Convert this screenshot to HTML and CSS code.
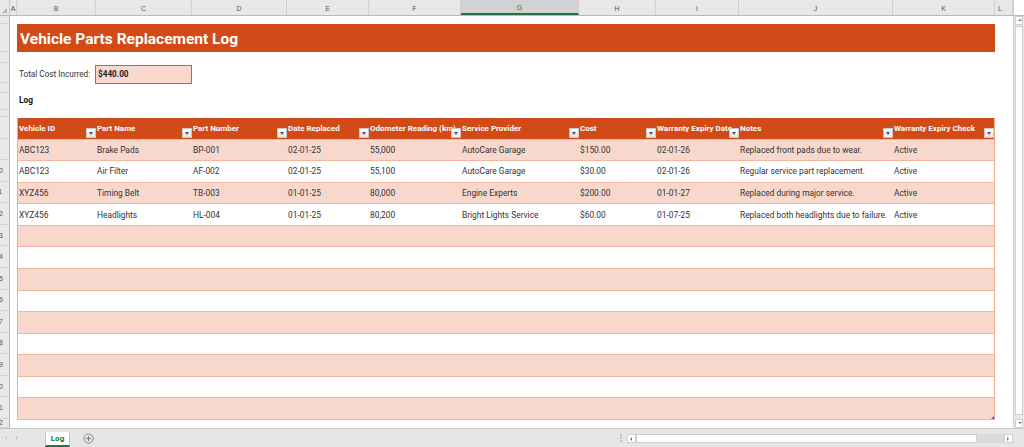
FILE: index.html
```html
<!DOCTYPE html>
<html>
<head>
<meta charset="utf-8">
<link rel="stylesheet" href="styles.css">
</head>
<body>
<div class="app">
  <div class="colbar">
    <div class="corner"><span class="tri"></span></div>
    <div class="colh w-a">A</div>
    <div class="colh w-b">B</div>
    <div class="colh w-c">C</div>
    <div class="colh w-d">D</div>
    <div class="colh w-e">E</div>
    <div class="colh w-f">F</div>
    <div class="colh w-g sel">G</div>
    <div class="colh w-h">H</div>
    <div class="colh w-i">I</div>
    <div class="colh w-j">J</div>
    <div class="colh w-k">K</div>
    <div class="colh w-l">L</div>
    <div class="colrest"></div>
  </div>
  <div class="main">
    <div class="rowheads">
      <div class="rh r1"></div>
      <div class="rh r2"></div>
      <div class="rh r3"></div>
      <div class="rh r4"></div>
      <div class="rh r5"></div>
      <div class="rh r6"></div>
      <div class="rh r7"></div>
      <div class="rh rt"></div>
      <div class="rh rt"><span>9</span></div>
      <div class="rh rt"><span>10</span></div>
      <div class="rh rt"><span>11</span></div>
      <div class="rh rt"><span>12</span></div>
      <div class="rh rt"><span>13</span></div>
      <div class="rh rt"><span>14</span></div>
      <div class="rh rt"><span>15</span></div>
      <div class="rh rt"><span>16</span></div>
      <div class="rh rt"><span>17</span></div>
      <div class="rh rt"><span>18</span></div>
      <div class="rh rt"><span>19</span></div>
      <div class="rh rt"><span>20</span></div>
      <div class="rh rt"><span>21</span></div>
      <div class="rh r22"><span>22</span></div>
    </div>
    <div class="sheet">
      <div class="title">Vehicle Parts Replacement Log</div>
      <div class="total">
        <div class="total-label">Total Cost Incurred:</div>
        <div class="total-box">$440.00</div>
      </div>
      <div class="section">Log</div>
      <div class="table">
        <div class="tr head">
          <div class="th">Vehicle ID<span class="dd"></span></div>
          <div class="th">Part Name<span class="dd"></span></div>
          <div class="th">Part Number<span class="dd"></span></div>
          <div class="th">Date Replaced<span class="dd"></span></div>
          <div class="th">Odometer Reading (km)<span class="dd"></span></div>
          <div class="th">Service Provider<span class="dd"></span></div>
          <div class="th">Cost<span class="dd"></span></div>
          <div class="th">Warranty Expiry Date<span class="dd"></span></div>
          <div class="th">Notes<span class="dd"></span></div>
          <div class="th">Warranty Expiry Check<span class="dd"></span></div>
        </div>
        <div class="tr odd">
          <div class="td">ABC123</div><div class="td">Brake Pads</div><div class="td">BP-001</div><div class="td">02-01-25</div><div class="td">55,000</div><div class="td">AutoCare Garage</div><div class="td">$150.00</div><div class="td">02-01-26</div><div class="td">Replaced front pads due to wear.</div><div class="td">Active</div>
        </div>
        <div class="tr">
          <div class="td">ABC123</div><div class="td">Air Filter</div><div class="td">AF-002</div><div class="td">02-01-25</div><div class="td">55,100</div><div class="td">AutoCare Garage</div><div class="td">$30.00</div><div class="td">02-01-26</div><div class="td">Regular service part replacement.</div><div class="td">Active</div>
        </div>
        <div class="tr odd">
          <div class="td">XYZ456</div><div class="td">Timing Belt</div><div class="td">TB-003</div><div class="td">01-01-25</div><div class="td">80,000</div><div class="td">Engine Experts</div><div class="td">$200.00</div><div class="td">01-01-27</div><div class="td">Replaced during major service.</div><div class="td">Active</div>
        </div>
        <div class="tr">
          <div class="td">XYZ456</div><div class="td">Headlights</div><div class="td">HL-004</div><div class="td">01-01-25</div><div class="td">80,200</div><div class="td">Bright Lights Service</div><div class="td">$60.00</div><div class="td">01-07-25</div><div class="td">Replaced both headlights due to failure.</div><div class="td">Active</div>
        </div>
        <div class="tr odd empty"></div>
        <div class="tr empty"></div>
        <div class="tr odd empty"></div>
        <div class="tr empty"></div>
        <div class="tr odd empty"></div>
        <div class="tr empty"></div>
        <div class="tr odd empty"></div>
        <div class="tr empty"></div>
        <div class="tr odd empty last"><span class="resize"></span></div>
      </div>
    </div>
    <div class="vscroll">
      <div class="varrow up"></div>
      <div class="vtrack"></div>
      <div class="varrow down"></div>
    </div>
  </div>
  <div class="tabbar">
    <div class="nav"><span class="navl"></span><span class="navr"></span></div>
    <div class="tab">Log</div>
    <div class="addtab"><svg width="11" height="11" viewBox="0 0 11 11"><circle cx="5.5" cy="5.5" r="4.6" fill="none" stroke="#7a7a7a" stroke-width="0.9"/><path d="M5.5 3v5M3 5.5h5" stroke="#7a7a7a" stroke-width="1"/></svg></div>
    <div class="tabspace"></div>
    <div class="dots"></div>
    <div class="hscroll">
      <div class="harrow left"></div>
      <div class="hthumb"></div>
      <div class="htrack"></div>
      <div class="harrow right"></div>
    </div>
  </div>
</div>
</body>
</html>
```

FILE: styles.css
```css
* { box-sizing: border-box; }
html, body { margin: 0; padding: 0; }
body {
  width: 1024px;
  height: 447px;
  overflow: hidden;
  background: #fff;
  font-family: Roboto, "Liberation Sans", Arial, sans-serif;
  color: #222;
}
.app { display: flex; flex-direction: column; height: 447px; }

/* column header bar */
.colbar {
  display: flex;
  height: 16px;
  background: #e8e8e8;
  border-bottom: 1px solid #b9b9b9;
  font-family: "Liberation Sans", Arial, sans-serif;
  font-size: 7px;
  color: #555;
}
.corner { width: 10px; border-right: 1px solid #c9c9c9; position: relative; }
.corner .tri {
  position: absolute; right: 2px; bottom: 2px;
  width: 0; height: 0;
  border-left: 5px solid transparent;
  border-bottom: 5px solid #b3b3b3;
}
.colh {
  display: flex; align-items: center; justify-content: center;
  border-right: 1px solid #d0d0d0;
  padding-top: 1px;
}
.colh.sel { background: #d2d2d2; border-bottom: 2px solid #217346; color: #217346; }
.w-a { width: 7px; }
.w-b { width: 79px; }
.w-c { width: 96px; }
.w-d { width: 95px; }
.w-e { width: 82px; }
.w-f { width: 92px; }
.w-g { width: 118px; }
.w-h { width: 77px; }
.w-i { width: 83px; }
.w-j { width: 154px; }
.w-k { width: 102px; }
.w-l { width: 18px; justify-content: flex-start; padding-left: 3px; }
.colrest { flex: 1; background: #fff; border-left: 1px solid #d0d0d0; }

/* main area */
.main { display: flex; height: 412px; }
.rowheads {
  width: 10px;
  background: #e8e8e8;
  border-right: 1px solid #b9b9b9;
  display: flex; flex-direction: column;
  font-family: "Liberation Sans", Arial, sans-serif;
  font-size: 7px;
  color: #555;
}
.rh {
  border-bottom: 1px solid #d4d4d4;
  overflow: hidden;
  display: flex; align-items: center;
  white-space: nowrap;
}
.rh span { margin-left: -5px; }
.r1 { height: 8px; }
.r2 { height: 28px; }
.r3 { height: 11px; }
.r4 { height: 20px; }
.r5 { height: 10px; }
.r6 { height: 17px; }
.r7 { height: 7px; }
.rt { height: 21.57px; }
.r22 { flex: 1; }

.sheet { flex: 1; padding: 8px 0 0 7px; min-width: 0; }

.title {
  width: 978px;
  height: 28px;
  background: #d24a18;
  color: #fff;
  font-weight: 700;
  font-size: 15.5px;
  display: flex; align-items: center;
  padding-left: 3px;
  padding-top: 1px;
}

.total { display: flex; align-items: center; height: 22px; margin-top: 11px; }
.total-label { width: 78px; font-size: 8.2px; padding-left: 2px; color: #333; }
.total-box {
  width: 97px; height: 19px;
  background: #f8d8cc;
  border: 1px solid #7b7b7b;
  font-size: 8.2px; font-weight: 700;
  display: flex; align-items: center;
  padding-left: 2px;
}

.section { height: 22px; margin-top: 4px; font-size: 8.4px; font-weight: 700; padding-left: 2px; display: flex; align-items: center; color: #111; }

.table {
  margin-top: 7px;
  width: 978px;
  border-left: 1px solid #f2a98e;
  border-right: 1px solid #f2a98e;
}
.tr {
  display: grid;
  grid-template-columns: 78px 96px 95px 82px 92px 118px 77px 83px 154px 101px;
  height: 21.57px;
  border-bottom: 1px solid #f4b6a0;
  font-size: 8.4px;
  color: #333;
  position: relative;
}
.tr.odd { background: #f8d8cc; }
.tr.head {
  background: #d24a18;
  color: #fff;
  font-weight: 700;
  font-size: 8px;
  border-bottom: 1px solid #f4b6a0;
}
.th {
  position: relative;
  white-space: nowrap;
  padding: 6px 0 0 1px;
}
.dd {
  position: absolute; right: 0; bottom: 1px;
  width: 10px; height: 10px;
  background: linear-gradient(#ffffff, #e6e6e6);
  border: 1px solid #c6c6c6;
}
.dd::after {
  content: "";
  position: absolute; left: 2px; top: 3px;
  border-left: 2.5px solid transparent;
  border-right: 2.5px solid transparent;
  border-top: 3px solid #555;
}
.td {
  white-space: nowrap;
  padding-left: 1px;
  display: flex; align-items: center;
}
.resize {
  position: absolute; right: 0; bottom: 0;
  width: 0; height: 0;
  border-left: 3px solid transparent;
  border-bottom: 3px solid #5a5a9a;
}

/* vertical scrollbar */
.vscroll {
  width: 11px;
  display: flex; flex-direction: column;
  background: #e8e8e8;
  border-left: 1px solid #d0d0d0;
  padding: 0 1px;
}
.varrow { height: 9px; background: #fff; border: 1px solid #cfcfcf; position: relative; }
.varrow::after {
  content: ""; position: absolute; left: 2px; top: 2px;
  border-left: 2px solid transparent; border-right: 2px solid transparent;
}
.varrow.up::after { border-bottom: 2px solid #777; }
.varrow.down::after { border-top: 2px solid #777; }
.vtrack { flex: 1; background: #fff; border: 1px solid #cfcfcf; margin: 1px 0 4px; }

/* tab bar */
.tabbar {
  height: 19px;
  display: flex; align-items: stretch;
  background: #e6e6e6;
  border-top: 1px solid #c6c6c6;
}
.nav { width: 45px; display: flex; align-items: center; gap: 9px; padding-left: 5px; }
.navl, .navr { width: 0; height: 0; border-top: 2px solid transparent; border-bottom: 2px solid transparent; }
.navl { border-right: 2px solid #c4c4c4; }
.navr { border-left: 2px solid #c4c4c4; }
.tab {
  width: 25px;
  margin-top: 3px;
  background: #fff;
  border-left: 1px solid #c6c6c6;
  border-right: 1px solid #c6c6c6;
  border-bottom: 2px solid #217346;
  color: #217346;
  font-weight: 700;
  font-size: 8px;
  display: flex; align-items: center; justify-content: center;
}
.addtab { width: 24px; display: flex; align-items: center; justify-content: flex-end; padding-top: 1px; }
.tabspace { flex: 1; }
.dots {
  width: 12px;
  background: radial-gradient(circle, #9d9d9d 0.6px, transparent 0.8px) center / 2px 3px repeat-y;
  margin: 5px 0 5px;
}
.hscroll { width: 397px; display: flex; align-items: center; padding-right: 11px; gap: 0; }
.harrow { width: 9px; height: 9px; background: #fff; border: 1px solid #cfcfcf; position: relative; }
.harrow::after { content: ""; position: absolute; top: 2px; left: 2px; border-top: 2px solid transparent; border-bottom: 2px solid transparent; }
.harrow.left::after { border-right: 2px solid #777; }
.harrow.right::after { border-left: 2px solid #777; }
.hthumb { width: 341px; height: 9px; background: #fff; border: 1px solid #cfcfcf; }
.htrack { flex: 1; height: 9px; background: #dadada; }
```
